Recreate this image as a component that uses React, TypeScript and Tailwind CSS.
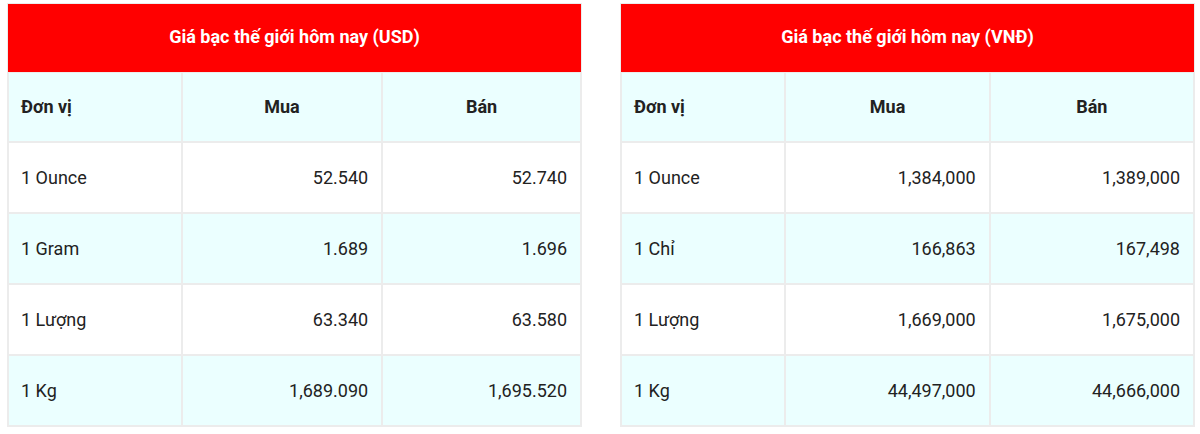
const tables = [
  {
    title: 'Giá bạc thế giới hôm nay (USD)',
    cols: ['w-[30.3%]', 'w-[35%]', 'w-[34.7%]'],
    rows: [
      ['1 Ounce', '52.540', '52.740'],
      ['1 Gram', '1.689', '1.696'],
      ['1 Lượng', '63.340', '63.580'],
      ['1 Kg', '1,689.090', '1,695.520'],
    ],
  },
  {
    title: 'Giá bạc thế giới hôm nay (VNĐ)',
    cols: ['w-[28.7%]', 'w-[35.65%]', 'w-[35.65%]'],
    rows: [
      ['1 Ounce', '1,384,000', '1,389,000'],
      ['1 Chỉ', '166,863', '167,498'],
      ['1 Lượng', '1,669,000', '1,675,000'],
      ['1 Kg', '44,497,000', '44,666,000'],
    ],
  },
];

const cell = 'border border-[#ececec] px-[13px] leading-[24px]';

function PriceTable({ title, cols, rows }: (typeof tables)[number]) {
  return (
    <table className="w-[575px] shrink-0 table-fixed border-separate border-spacing-0 border border-[#ececec] text-[18px] text-[#222]">
      <colgroup>
        {cols.map((c, i) => (
          <col key={i} className={c} />
        ))}
      </colgroup>
      <thead>
        <tr>
          <th colSpan={3} className="h-[68px] bg-[#ff0000] text-center font-bold text-white leading-[24px] pb-[2px]">
            {title}
          </th>
        </tr>
        <tr className="bg-[#ebffff]">
          <th className={`${cell} pl-[12px] h-[70px] text-left font-bold`}>Đơn vị</th>
          <th className={`${cell} h-[70px] text-center font-bold`}>Mua</th>
          <th className={`${cell} h-[70px] text-center font-bold`}>Bán</th>
        </tr>
      </thead>
      <tbody>
        {rows.map((r, i) => (
          <tr key={i} className={i % 2 === 1 ? 'bg-[#ebffff]' : 'bg-white'}>
            <td className={`${cell} pl-[12px] h-[71px] text-left`}>{r[0]}</td>
            <td className={`${cell} h-[71px] text-right`}>{r[1]}</td>
            <td className={`${cell} h-[71px] text-right`}>{r[2]}</td>
          </tr>
        ))}
      </tbody>
    </table>
  );
}

export default function App() {
  return (
    <div className="w-[1200px] h-[434px] bg-white pl-[7px] pt-[3px] flex items-start gap-[38px] font-['Roboto',sans-serif]">
      {tables.map((t) => (
        <PriceTable key={t.title} {...t} />
      ))}
    </div>
  );
}
